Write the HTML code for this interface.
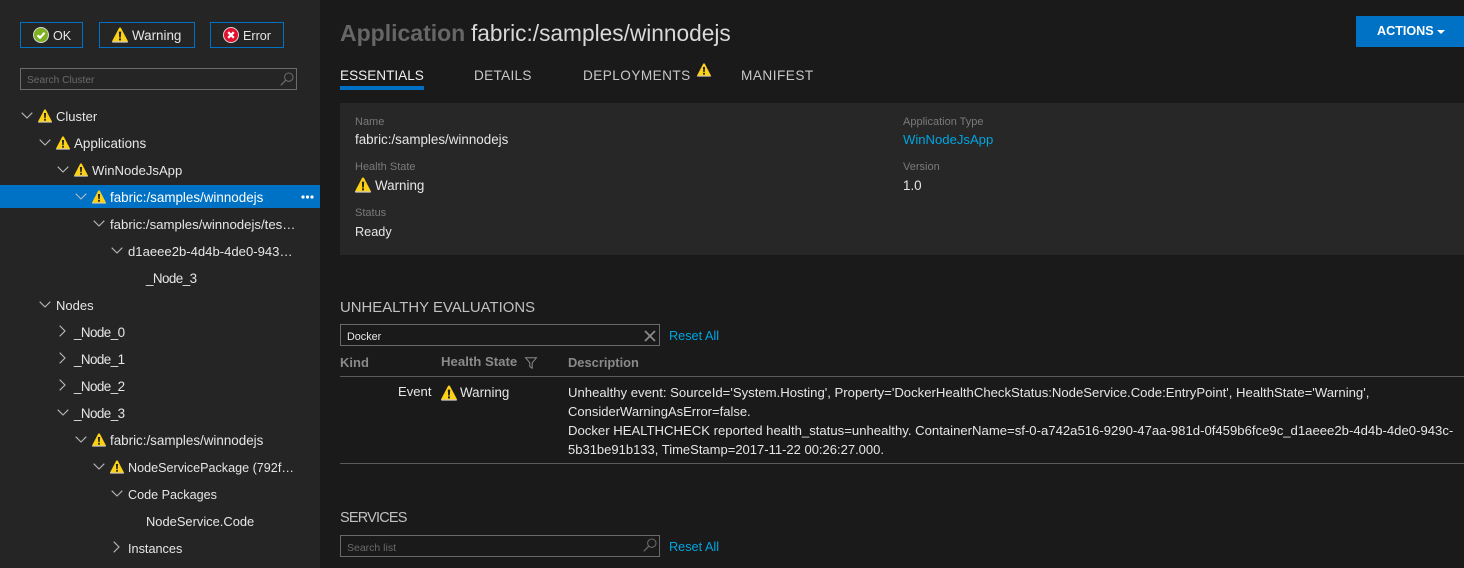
<!DOCTYPE html>
<html lang="en"><head><meta charset="utf-8"><title>Service Fabric Explorer</title>
<style>
html,body{margin:0;padding:0;width:1464px;height:568px;overflow:hidden;background:#1a1a1a}
body{position:relative;font-family:"Liberation Sans",sans-serif;font-size:13.4px;color:#e6e6e6}
.a{position:absolute}
.t{position:absolute;white-space:nowrap;line-height:20px;height:20px;margin-top:1px}
.side{position:absolute;left:0;top:0;width:320px;height:568px;background:#252525}
.btn{position:absolute;top:22px;height:24px;border:1px solid #0072c6}
.sel{position:absolute;left:0;top:185px;width:320px;height:23px;background:#0072c6}
.box{position:absolute;border:1px solid #6a6a6a;box-sizing:border-box}
.lbl{font-size:11px;color:#7a7a7a}
.hd{font-weight:bold;color:#8a8a8a}
.lnk{color:#00a5e0}
.tab{font-size:13.6px;color:#c8c8c8}
.sec{color:#c0c0c0;font-size:14.9px}
.n{letter-spacing:-.55px}
svg.a{overflow:visible}
</style></head><body>
<svg width="0" height="0" style="position:absolute"><defs>
<symbol id="w" viewBox="0 0 16 16"><path d="M7.2.6H8.8L16 14.4 15.6 15.4H.4L0 14.4Z" fill="#fcd116"/><path d="M.2 14.4H15.8L15.6 15.6H.4Z" fill="#c9c9c9"/><path d="M6.8 4.6H9.2L8.8 10.6H7.2Z" fill="#222"/><rect x="7" y="11.4" width="2" height="2" fill="#222"/></symbol>
<symbol id="dn" viewBox="0 0 12 7"><path d="M.7.7 6 6l5.3-5.3" fill="none" stroke="#b8b8b8" stroke-width="1.1"/></symbol>
<symbol id="rt" viewBox="0 0 7 12"><path d="M.7.7 6 6 .7 11.3" fill="none" stroke="#b8b8b8" stroke-width="1.1"/></symbol>
<symbol id="mag" viewBox="0 0 14 14"><circle cx="8.8" cy="5.2" r="4.2" fill="none" stroke="#6a6a6a" stroke-width="1.1"/><path d="M5.8 8.2 .7 13.3" stroke="#6a6a6a" stroke-width="1.3"/></symbol>
</defs></svg>

<div class="side"></div>
<div class="btn" style="left:20px;width:61px"></div>
<div class="btn" style="left:99px;width:94px"></div>
<div class="btn" style="left:210px;width:72px"></div>
<svg class="a" style="left:33px;top:27px" width="16" height="16" viewBox="0 0 16 16"><circle cx="8" cy="8" r="8" fill="#d8d8d8"/><circle cx="8" cy="8" r="7" fill="#7fb022"/><path d="M4.5 8.3 7 10.7 11.6 5.8" fill="none" stroke="#fff" stroke-width="2.2"/></svg>
<span class="t" style="left:53px;top:25px;font-size:12.6px">OK</span>
<svg class="a" style="left:112px;top:27px" width="16" height="16"><use href="#w"/></svg>
<span class="t" style="left:132px;top:25px;font-size:13.4px">Warning</span>
<svg class="a" style="left:223px;top:27px" width="16" height="16" viewBox="0 0 16 16"><circle cx="8" cy="8" r="8" fill="#d8d8d8"/><circle cx="8" cy="8" r="7" fill="#e2102f"/><path d="M5.2 5.2 10.8 10.8M10.8 5.2 5.2 10.8" stroke="#fff" stroke-width="2.2"/></svg>
<span class="t" style="left:243px;top:25px;font-size:12.6px">Error</span>

<div class="box" style="left:20px;top:68px;width:277px;height:22px"></div>
<span class="t" style="left:27px;top:70px;font-size:10.2px;color:#6a6a6a">Search Cluster</span>
<svg class="a" style="left:280px;top:72px" width="14" height="14"><use href="#mag"/></svg>

<div class="sel"></div>
<svg class="a" style="left:21px;top:112px" width="12" height="7"><use href="#dn"/></svg>
<svg class="a" style="left:38px;top:109px" width="14" height="14"><use href="#w"/></svg>
<span class="t" style="left:56px;top:106px;font-size:13px">Cluster</span>
<svg class="a" style="left:39px;top:139px" width="12" height="7"><use href="#dn"/></svg>
<svg class="a" style="left:56px;top:136px" width="14" height="14"><use href="#w"/></svg>
<span class="t" style="left:74px;top:133px">Applications</span>
<svg class="a" style="left:57px;top:166px" width="12" height="7"><use href="#dn"/></svg>
<svg class="a" style="left:74px;top:163px" width="14" height="14"><use href="#w"/></svg>
<span class="t" style="left:92px;top:160px;font-size:13.1px">WinNodeJsApp</span>
<svg class="a" style="left:75px;top:193px" width="12" height="7"><use href="#dn"/></svg>
<svg class="a" style="left:92px;top:190px" width="14" height="14"><use href="#w"/></svg>
<span class="t" style="left:110px;top:187px;color:#fff">fabric:/samples/winnodejs</span>
<svg class="a" style="left:301px;top:195px" width="13" height="4"><circle cx="2" cy="2" r="1.6" fill="#fff"/><circle cx="6.5" cy="2" r="1.6" fill="#fff"/><circle cx="11" cy="2" r="1.6" fill="#fff"/></svg>
<svg class="a" style="left:93px;top:220px" width="12" height="7"><use href="#dn"/></svg>
<span class="t" style="left:110px;top:214px;font-size:13.2px">fabric:/samples/winnodejs/tes…</span>
<svg class="a" style="left:111px;top:247px" width="12" height="7"><use href="#dn"/></svg>
<span class="t" style="left:128px;top:241px;font-size:13.1px">d1aeee2b-4d4b-4de0-943…</span>
<span class="t n" style="left:146px;top:268px">_Node_3</span>
<svg class="a" style="left:39px;top:301px" width="12" height="7"><use href="#dn"/></svg>
<span class="t" style="left:56px;top:295px;font-size:13px">Nodes</span>
<svg class="a" style="left:59px;top:325px" width="7" height="12"><use href="#rt"/></svg>
<span class="t n" style="left:74px;top:322px">_Node_0</span>
<svg class="a" style="left:59px;top:352px" width="7" height="12"><use href="#rt"/></svg>
<span class="t n" style="left:74px;top:349px">_Node_1</span>
<svg class="a" style="left:59px;top:379px" width="7" height="12"><use href="#rt"/></svg>
<span class="t n" style="left:74px;top:376px">_Node_2</span>
<svg class="a" style="left:57px;top:409px" width="12" height="7"><use href="#dn"/></svg>
<span class="t n" style="left:74px;top:403px">_Node_3</span>
<svg class="a" style="left:75px;top:436px" width="12" height="7"><use href="#dn"/></svg>
<svg class="a" style="left:92px;top:433px" width="14" height="14"><use href="#w"/></svg>
<span class="t" style="left:110px;top:430px">fabric:/samples/winnodejs</span>
<svg class="a" style="left:93px;top:463px" width="12" height="7"><use href="#dn"/></svg>
<svg class="a" style="left:110px;top:460px" width="14" height="14"><use href="#w"/></svg>
<span class="t" style="left:128px;top:457px;font-size:12.6px">NodeServicePackage (792f…</span>
<svg class="a" style="left:111px;top:490px" width="12" height="7"><use href="#dn"/></svg>
<span class="t" style="left:128px;top:484px;font-size:12.6px">Code Packages</span>
<span class="t" style="left:146px;top:511px;font-size:12.9px">NodeService.Code</span>
<svg class="a" style="left:113px;top:541px" width="7" height="12"><use href="#rt"/></svg>
<span class="t" style="left:128px;top:538px;font-size:12.7px">Instances</span>

<span class="t" style="left:340px;top:22px;font-size:23px;font-weight:bold;color:#666;line-height:22px;margin-top:0">Application</span>
<span class="t" style="left:471px;top:22px;font-size:22.7px;color:#d8d8d8;line-height:22px;margin-top:0">fabric:/samples/winnodejs</span>
<div class="a" style="left:1356px;top:16px;width:108px;height:31px;background:#0072c6"></div>
<span class="t" style="left:1377px;top:21px;font-size:12.6px;font-weight:bold;color:#fff;margin-top:0">ACTIONS</span>
<svg class="a" style="left:1437px;top:30px" width="8" height="4"><path d="M0 0H8L4 4Z" fill="#fff"/></svg>

<span class="t tab" style="left:340px;top:65px;color:#f0f0f0">ESSENTIALS</span>
<div class="a" style="left:340px;top:86px;width:84px;height:4px;background:#0072c6"></div>
<span class="t tab" style="left:474px;top:65px;letter-spacing:.3px">DETAILS</span>
<span class="t tab" style="left:583px;top:65px;letter-spacing:.45px">DEPLOYMENTS</span>
<svg class="a" style="left:697px;top:63px" width="14" height="14"><use href="#w"/></svg>
<span class="t tab" style="left:741px;top:65px;letter-spacing:.5px">MANIFEST</span>

<div class="a" style="left:340px;top:103px;width:1124px;height:152px;background:#272727"></div>
<span class="t lbl" style="left:355px;top:111px">Name</span>
<span class="t" style="left:355px;top:129px">fabric:/samples/winnodejs</span>
<span class="t lbl" style="left:355px;top:156px">Health State</span>
<svg class="a" style="left:355px;top:177px" width="16" height="16"><use href="#w"/></svg>
<span class="t" style="left:375px;top:175px">Warning</span>
<span class="t lbl" style="left:355px;top:202px">Status</span>
<span class="t" style="left:355px;top:221px;font-size:12.7px">Ready</span>
<span class="t lbl" style="left:903px;top:111px">Application Type</span>
<span class="t lnk" style="left:903px;top:129px;font-size:13.1px">WinNodeJsApp</span>
<span class="t lbl" style="left:903px;top:156px">Version</span>
<span class="t" style="left:903px;top:175px">1.0</span>

<span class="t sec" style="left:340px;top:297px">UNHEALTHY EVALUATIONS</span>
<div class="box" style="left:340px;top:324px;width:320px;height:22px"></div>
<span class="t" style="left:347px;top:326px;font-size:10.8px">Docker</span>
<svg class="a" style="left:644px;top:330px" width="12" height="12"><path d="M1 1 11 11M11 1 1 11" stroke="#8a8a8a" stroke-width="1.8"/></svg>
<span class="t lnk" style="left:669px;top:325px;font-size:12.7px">Reset All</span>
<span class="t hd" style="left:340px;top:352px;font-size:13px">Kind</span>
<span class="t hd" style="left:441px;top:351px;font-size:13.2px">Health State</span>
<svg class="a" style="left:525px;top:357px" width="12" height="12" viewBox="0 0 12 12"><path d="M.6.8H11.4L7.2 5.8V11.2L4.8 9.6V5.8Z" fill="none" stroke="#8a8a8a"/></svg>
<span class="t hd" style="left:568px;top:352px;font-size:12.9px">Description</span>
<div class="a" style="left:340px;top:376px;width:1124px;height:1px;background:#5a5a5a"></div>
<span class="t" style="left:398px;top:381px;font-size:13.1px">Event</span>
<svg class="a" style="left:441px;top:385px" width="16" height="16"><use href="#w"/></svg>
<span class="t" style="left:460px;top:382px">Warning</span>
<span class="t" style="left:568px;top:382px;font-size:13.14px">Unhealthy event: SourceId='System.Hosting', Property='DockerHealthCheckStatus:NodeService.Code:EntryPoint', HealthState='Warning',</span>
<span class="t" style="left:568px;top:401px;font-size:13px">ConsiderWarningAsError=false.</span>
<span class="t" style="left:568px;top:420px;font-size:13.14px">Docker HEALTHCHECK reported health_status=unhealthy. ContainerName=sf-0-a742a516-9290-47aa-981d-0f459b6fce9c_d1aeee2b-4d4b-4de0-943c-</span>
<span class="t" style="left:568px;top:439px;font-size:13px">5b31be91b133, TimeStamp=2017-11-22 00:26:27.000.</span>
<div class="a" style="left:340px;top:463px;width:1124px;height:1px;background:#5a5a5a"></div>

<span class="t sec" style="left:340px;top:507px;font-size:14.5px;letter-spacing:-.8px">SERVICES</span>
<div class="box" style="left:340px;top:535px;width:320px;height:22px"></div>
<span class="t" style="left:347px;top:537px;font-size:10.5px;color:#6a6a6a">Search list</span>
<svg class="a" style="left:643px;top:538px" width="14" height="14"><use href="#mag"/></svg>
<span class="t lnk" style="left:669px;top:536px;font-size:12.7px">Reset All</span>
<span class="t hd" style="left:966px;top:563px">Service Kind</span>
<span class="t hd" style="left:1133px;top:563px">Health State</span>
<span class="t hd" style="left:1307px;top:563px">Status</span>
</body></html>
